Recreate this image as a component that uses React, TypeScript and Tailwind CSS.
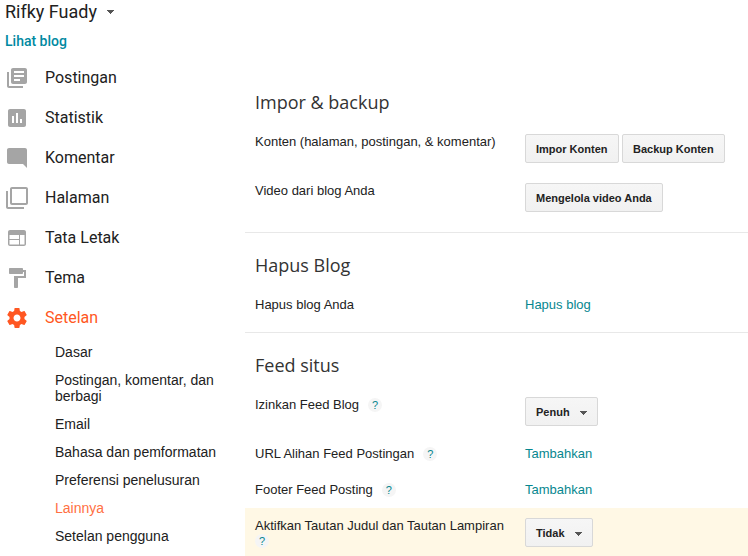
import type { ReactNode } from "react";
import { MdAssessment, MdFilterNone, MdFormatPaint, MdLibraryBooks, MdModeComment } from "react-icons/md";

const LayoutIcon = () => (
  <svg width="24" height="24" viewBox="0 0 24 24" fill="currentColor" fillRule="evenodd">
    <path d="M19 4H5c-1.100 0-2 .9-2 2v12c0 1.100.9 2 2 2h14c1.100 0 2-.9 2-2V6c0-1.100-.9-2-2-2zM14 13H4.500V9H14v4zm0 5.500H4.500V14H14v4.500zm5.500 0H15V9h4.500v9.500z" />
  </svg>
);

const GearIcon = () => (
  <svg width="24" height="24" viewBox="0 0 24 24" fill="currentColor">
    <path d="M19.43 12.98c.04-.32.07-.64.07-.98s-.03-.66-.07-.98l2.110-1.650c.19-.15.24-.42.12-.64l-2-3.460c-.12-.22-.39-.3-.61-.22l-2.490 1c-.52-.4-1.080-.73-1.690-.98l-.38-2.650C14.460 2.180 14.250 2 14 2h-4c-.25 0-.46.18-.49.42l-.38 2.650c-.61.25-1.170.59-1.690.98l-2.490-1c-.23-.09-.49 0-.61.22l-2 3.460c-.13.22-.07.49.12.64l2.110 1.650c-.04.32-.07.65-.07.98s.03.66.07.98l-2.110 1.650c-.19.15-.24.42-.12.64l2 3.460c.12.22.39.3.61.22l2.490-1c.52.4 1.080.73 1.690.98l.38 2.650c.03.24.24.42.49.42h4c.25 0 .46-.18.49-.42l.38-2.650c.61-.25 1.170-.59 1.690-.98l2.490 1c.23.09.49 0 .61-.22l2-3.460c.12-.22.07-.49-.12-.64l-2.110-1.650zM12 15.500c-1.930 0-3.500-1.570-3.500-3.500s1.570-3.500 3.500-3.500 3.500 1.570 3.500 3.500-1.570 3.500-3.500 3.500z" />
  </svg>
);

const Caret = () => (
  <svg width="7" height="4" viewBox="0 0 7 4" fill="#555" shapeRendering="crispEdges">
    <path d="M0 0h7v1H6v1H5v1H4v1H3V3H2V2H1V1H0z" />
  </svg>
);

const nav: { label: string; icon: ReactNode; active?: boolean }[] = [
  { label: "Postingan", icon: <MdLibraryBooks size={24} /> },
  { label: "Statistik", icon: <MdAssessment size={24} /> },
  { label: "Komentar", icon: <MdModeComment size={24} /> },
  { label: "Halaman", icon: <MdFilterNone size={24} /> },
  { label: "Tata Letak", icon: <LayoutIcon /> },
  { label: "Tema", icon: <MdFormatPaint size={24} /> },
  { label: "Setelan", icon: <GearIcon />, active: true },
];

const subnav = ["Dasar", "Postingan, komentar, dan berbagi", "Email", "Bahasa dan pemformatan", "Preferensi penelusuran", "Lainnya", "Setelan pengguna"];

function Button({ children, menu }: { children: ReactNode; menu?: boolean }) {
  return (
    <button className="flex h-[29px] items-center rounded-[2px] border border-[#d8d8d8] bg-linear-to-b from-[#f6f6f6] to-[#f1f1f1] px-[10px] pt-px text-[11px] font-bold text-[#222]">
      {children}
      {menu && <span className="ml-[10px] mt-px"><Caret /></span>}
    </button>
  );
}

function Help({ className = "" }: { className?: string }) {
  return (
    <span className={`${className} inline-flex h-[14px] w-[14px] items-center justify-center rounded-full bg-[#f5f5f5] align-top text-[11px] leading-[14px] text-[#07878f]`}>?</span>
  );
}

function Row({ label, help, size = "", children }: { label: ReactNode; help?: boolean; size?: string; children: ReactNode }) {
  return (
    <div className={`flex items-start px-[10px] py-[10px] leading-[15px] ${size}`}>
      <div className="w-[270px] shrink-0">{label}{help && <Help className="ml-[9px] mt-px" />}</div>
      <div className="flex gap-[3.5px]">{children}</div>
    </div>
  );
}

function Section({ title, last, children }: { title: string; last?: boolean; children: ReactNode }) {
  return (
    <section className={last ? "" : "border-b border-[#e8e8e8] pb-[10px]"}>
      <h2 className="h-[54px] pl-[10px] pt-5 font-['Open_Sans',sans-serif] text-[18px] leading-6 text-[#333]">{title}</h2>
      {children}
    </section>
  );
}

const Link = ({ children }: { children: ReactNode }) => <a className="text-[#07878f]">{children}</a>;

export default function App() {
  return (
    <div className="flex h-[556px] w-[748px] overflow-hidden bg-white font-['Liberation_Sans',Arial,sans-serif] text-[13px] text-[#222]">
      <aside className="w-[245px] shrink-0 font-['Roboto',sans-serif] text-[#212121]">
        <div className="flex h-[23px] items-center pl-[5px] text-[18px]">
          Rifky Fuady <span className="ml-[10px]"><Caret /></span>
        </div>
        <a className="mt-[9px] block pl-[5px] text-[14px] font-medium leading-[18px] text-[#0089a1]">Lihat blog</a>
        <nav className="mt-2">
          {nav.map((n) => (
            <div key={n.label} className={`flex h-10 items-center pl-[5px] text-[16px] ${n.active ? "text-[#ff5722]" : ""}`}>
              <span className={`mr-4 ${n.active ? "" : "text-[#a5a5a5]"}`}>{n.icon}</span>
              {n.label}
            </div>
          ))}
        </nav>
        <ul className="mt-[6px] flex w-[230px] flex-col gap-3 pl-[55px] font-['Liberation_Sans',Arial,sans-serif] text-[14px] leading-4">
          {subnav.map((s) => (
            <li key={s} className={s === "Lainnya" ? "text-[#ff7043]" : ""}>{s}</li>
          ))}
        </ul>
      </aside>
      <main className="w-[503px] shrink-0 pt-[70px]">
        <Section title="Impor &amp; backup">
          <Row label="Konten (halaman, postingan, &amp; komentar)">
            <Button>Impor Konten</Button>
            <Button>Backup Konten</Button>
          </Row>
          <Row label="Video dari blog Anda">
            <Button>Mengelola video Anda</Button>
          </Row>
        </Section>
        <Section title="Hapus Blog">
          <Row label="Hapus blog Anda"><Link>Hapus blog</Link></Row>
        </Section>
        <Section title="Feed situs" last>
          <Row label="Izinkan Feed Blog" help size="h-[49px]"><Button menu>Penuh</Button></Row>
          <Row label="URL Alihan Feed Postingan" help size="h-9"><Link>Tambahkan</Link></Row>
          <Row label="Footer Feed Posting" help size="h-9"><Link>Tambahkan</Link></Row>
          <Row label={<>Aktifkan Tautan Judul dan Tautan Lampiran<br /><Help className="mt-px" /></>} size="h-12 bg-[#fff8e5]">
            <Button menu>Tidak</Button>
          </Row>
        </Section>
      </main>
    </div>
  );
}
